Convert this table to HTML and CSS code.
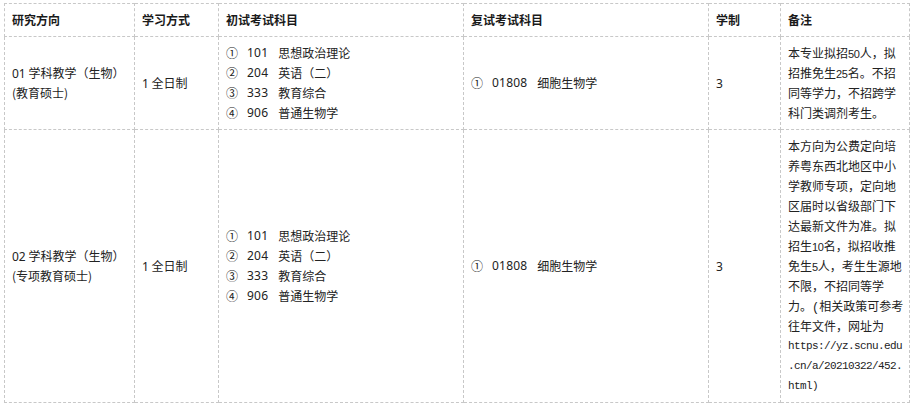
FILE: index.html
```html
<!DOCTYPE html>
<html lang="zh-CN">
<head>
<meta charset="utf-8">
<title>招生目录</title>
<link rel="stylesheet" href="styles.css">
</head>
<body>
<div class="page">
  <table class="catalog">
    <colgroup>
      <col class="c-dir">
      <col class="c-mode">
      <col class="c-exam">
      <col class="c-retest">
      <col class="c-years">
      <col class="c-note">
    </colgroup>
    <thead>
      <tr>
        <th>研究方向</th>
        <th>学习方式</th>
        <th>初试考试科目</th>
        <th>复试考试科目</th>
        <th>学制</th>
        <th>备注</th>
      </tr>
    </thead>
    <tbody>
      <tr class="row-1">
        <td>
          <span class="ln"><span class="code">01</span> 学科教学（生物）</span>
          <span class="ln">(教育硕士)</span>
        </td>
        <td><span class="ln"><span class="code">1</span> 全日制</span></td>
        <td>
          <div class="subj"><span class="idx">①</span><span class="code num">101</span><span>思想政治理论</span></div>
          <div class="subj"><span class="idx">②</span><span class="code num">204</span><span>英语（二）</span></div>
          <div class="subj"><span class="idx">③</span><span class="code num">333</span><span>教育综合</span></div>
          <div class="subj"><span class="idx">④</span><span class="code num">906</span><span>普通生物学</span></div>
        </td>
        <td>
          <div class="subj"><span class="idx">①</span><span class="code num">01808</span><span>细胞生物学</span></div>
        </td>
        <td><span class="ln"><span class="code">3</span></span></td>
        <td class="note">
          <span class="ln">本专业拟招<span class="sm">50</span>人，拟</span>
          <span class="ln">招推免生<span class="sm">25</span>名。不招</span>
          <span class="ln">同等学力，不招跨学</span>
          <span class="ln">科门类调剂考生。</span>
        </td>
      </tr>
      <tr class="row-2">
        <td>
          <span class="ln"><span class="code">02</span> 学科教学（生物）</span>
          <span class="ln">(专项教育硕士)</span>
        </td>
        <td><span class="ln"><span class="code">1</span> 全日制</span></td>
        <td>
          <div class="subj"><span class="idx">①</span><span class="code num">101</span><span>思想政治理论</span></div>
          <div class="subj"><span class="idx">②</span><span class="code num">204</span><span>英语（二）</span></div>
          <div class="subj"><span class="idx">③</span><span class="code num">333</span><span>教育综合</span></div>
          <div class="subj"><span class="idx">④</span><span class="code num">906</span><span>普通生物学</span></div>
        </td>
        <td>
          <div class="subj"><span class="idx">①</span><span class="code num">01808</span><span>细胞生物学</span></div>
        </td>
        <td><span class="ln"><span class="code">3</span></span></td>
        <td class="note">
          <span class="ln">本方向为公费定向培</span>
          <span class="ln">养粤东西北地区中小</span>
          <span class="ln">学教师专项，定向地</span>
          <span class="ln">区届时以省级部门下</span>
          <span class="ln">达最新文件为准。拟</span>
          <span class="ln">招生<span class="sm">10</span>名，拟招收推</span>
          <span class="ln">免生<span class="sm">5</span>人，考生生源地</span>
          <span class="ln">不限，不招同等学</span>
          <span class="ln">力。<span class="half">(</span>相关政策可参考</span>
          <span class="ln">往年文件，网址为</span>
          <span class="ln url">https://yz.scnu.edu</span>
          <span class="ln url">.cn/a/20210322/452.</span>
          <span class="ln url">html<span class="half">)</span></span>
        </td>
      </tr>
    </tbody>
  </table>
</div>
</body>
</html>
```

FILE: styles.css
```css
html, body {
  margin: 0;
  padding: 0;
  background: #ffffff;
}

.page {
  padding: 3px 0 0 4px;
}

.catalog {
  border-collapse: collapse;
  table-layout: fixed;
  width: 905px;
  font-family: "Noto Sans CJK SC", "Noto Sans", sans-serif;
  font-size: 12px;
  line-height: 20px;
  color: #222222;
}

.c-dir { width: 130px; }
.c-mode { width: 84px; }
.c-exam { width: 245px; }
.c-retest { width: 245px; }
.c-years { width: 72px; }
.c-note { width: 129px; }

.catalog th,
.catalog td {
  border: 1px dashed #c8c8c8;
  padding: 6px 7px;
  text-align: left;
  vertical-align: middle;
}

.catalog th {
  height: 19px;
  font-weight: 700;
  color: #1a1a1a;
  white-space: nowrap;
  overflow: hidden;
}

.ln {
  display: block;
  height: 20px;
  line-height: 20px;
  white-space: nowrap;
}

.code,
.sm,
.half {
  line-height: 1;
}

.code {
  font-family: "Noto Sans", "Liberation Sans", sans-serif;
}

.subj {
  display: flex;
  align-items: center;
  height: 20px;
  white-space: nowrap;
}

.subj > span {
  line-height: 1;
}

.idx {
  width: 12px;
  margin-right: 9px;
  font-family: "Noto Sans CJK SC", sans-serif;
}

.num {
  margin-right: 10px;
  letter-spacing: 0.2px;
}

.note {
  white-space: nowrap;
}

.sm {
  font-family: "Liberation Sans", sans-serif;
  font-size: 11px;
  letter-spacing: -0.3px;
}

.half {
  font-family: "Liberation Mono", monospace;
}

.url {
  font-family: "Liberation Mono", monospace;
  font-size: 11px;
  letter-spacing: -0.6px;
}
```
